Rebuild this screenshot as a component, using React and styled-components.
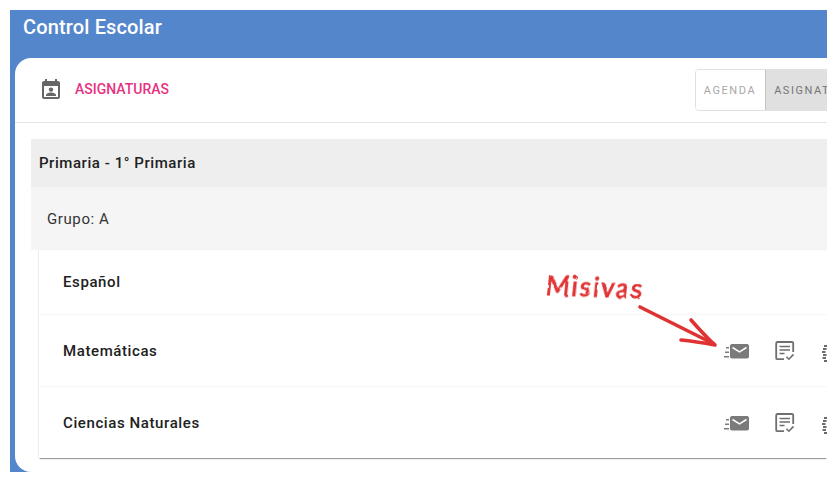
import React from "react";
import styled, { createGlobalStyle } from "styled-components";

const GlobalStyle = createGlobalStyle`
  html, body {
    margin: 0;
    padding: 0;
    background: #fff;
  }
  body {
    font-family: Roboto, "Liberation Sans", sans-serif;
    overflow: hidden;
  }
`;

const Page = styled.div`
  width: 837px;
  height: 482px;
  padding: 10px;
  box-sizing: border-box;
  position: relative;
`;

const Shell = styled.div`
  height: 100%;
  width: 817px;
  background: #5486cc;
  display: flex;
  flex-direction: column;
  overflow: hidden;
`;

const AppBar = styled.div`
  height: 48px;
  flex: none;
  padding: 5px 0 0 13px;
  box-sizing: border-box;
  color: #fff;
  font-size: 20px;
  font-weight: 500;
  letter-spacing: 0.15px;
  line-height: 24px;
`;

const Card = styled.div`
  flex: 1;
  margin-left: 5px;
  background: #fff;
  border-radius: 16px 0 0 16px;
  overflow: hidden;
  display: flex;
  flex-direction: column;
`;

const CardHeader = styled.div`
  height: 65px;
  flex: none;
  box-sizing: border-box;
  border-bottom: 1px solid #e4e4e4;
  display: flex;
  align-items: center;
  padding: 0 0 2px 24px;
`;

const Title = styled.span`
  margin-left: 12px;
  color: #e7327f;
  font-size: 14px;
  font-weight: 500;
`;

const Toggle = styled.div`
  margin: 2px -47px 0 auto;
  display: flex;
  height: 42px;
  box-sizing: border-box;
  border: 1px solid #e0e0e0;
  border-radius: 4px;
  overflow: hidden;
`;

const ToggleItem = styled.div`
  display: flex;
  align-items: center;
  padding: 0 9px 0 8px;
  font-size: 11px;
  letter-spacing: 1.55px;
  color: ${(p) => (p.$active ? "#757575" : "#a8a8a8")};
  background: ${(p) => (p.$active ? "#e0e0e0" : "#fff")};
  border-left: ${(p) => (p.$active ? "1px solid #c4c4c4" : "none")};
  white-space: nowrap;
`;

const Body = styled.div`
  padding: 16px 0 0 16px;
`;

const LevelRow = styled.div`
  height: 48px;
  background: #eeeeee;
  color: #212121;
  font-size: 15px;
  font-weight: 500;
  letter-spacing: 0.55px;
  display: flex;
  align-items: center;
  padding-left: 8px;
`;

const GroupRow = styled.div`
  height: 63px;
  background: #f5f5f5;
  color: #333;
  font-size: 15px;
  letter-spacing: 0.6px;
  display: flex;
  align-items: center;
  padding-left: 16px;
`;

const SubjectList = styled.div`
  margin-left: 8px;
  background: #fff;
  box-shadow: 0 2px 1px -1px rgba(0, 0, 0, 0.3), 0 1px 1px rgba(0, 0, 0, 0.1),
    -1px 0 1px rgba(0, 0, 0, 0.05);
`;

const SubjectRow = styled.div`
  height: ${(p) => (p.$short ? "64px" : "72px")};
  box-sizing: border-box;
  display: flex;
  align-items: center;
  padding-left: 24px;
  color: #212121;
  font-size: 15px;
  font-weight: 500;
  letter-spacing: 0.6px;
  & + & {
    border-top: 1px solid #f7f7f7;
  }
`;

const Actions = styled.div`
  margin-left: auto;
  margin-right: -30px;
  display: flex;
  align-items: center;
  flex: none;
`;

const ActionSlot = styled.div`
  width: 48px;
  display: flex;
  justify-content: center;
`;

const Note = styled.div`
  position: absolute;
  left: 546px;
  top: 269px;
  color: #e03232;
  font-family: Lato, sans-serif;
  font-size: 26px;
  letter-spacing: 1.9px;
  line-height: 32px;
  -webkit-text-stroke: 0.8px #e03232;
  transform: rotate(2deg) skewX(-4deg);
  transform-origin: left center;
  filter: url(#rough);
`;

const NoteArrow = styled.svg`
  position: absolute;
  left: 636px;
  top: 302px;
`;

const HiddenDefs = styled.svg`
  position: absolute;
  width: 0;
  height: 0;
`;

const CalendarIcon = () => (
  <svg width="24" height="24" viewBox="0 0 24 24" fill="#666">
    <path d="M19 4h-1V2h-2v2H8V2H6v2H5c-1.1 0-2 .9-2 2v14c0 1.1.9 2 2 2h14c1.1 0 2-.9 2-2V6c0-1.1-.9-2-2-2zm0 16H5V9h14v11z" />
    <circle cx="12" cy="12.6" r="2.2" />
    <path d="M7 19v-1c0-1.7 3.3-2.6 5-2.6s5 .9 5 2.6v1z" />
  </svg>
);

const MailIcon = () => (
  <svg width="26" height="18" viewBox="0 0 26 18" fill="#7a7a7a">
    <path d="M8 2h15c1.1 0 2 .9 2 2v10.5c0 1.1-.9 2-2 2H8c-1.1 0-2-.9-2-2V4c0-1.1.9-2 2-2z" />
    <path d="M8.5 5.5l7 4.3 7-4.3" fill="none" stroke="#fff" strokeWidth="1.5" />
    <path d="M2 5h3v1.5H2zM1 9.5h4V11H1zM0 14h5v1.5H0z" />
  </svg>
);

const ChecklistIcon = () => (
  <svg width="22" height="22" viewBox="0 0 22 22" fill="none" stroke="#6f6f6f">
    <path d="M10 19.2H3.5c-.7 0-1.3-.6-1.3-1.3V3.3c0-.7.6-1.3 1.3-1.3h14.4c.7 0 1.3.6 1.3 1.3v8.7" strokeWidth="1.8" />
    <path d="M5.5 6.5h10.5M5.5 10h10.5M5.5 13.5h5" strokeWidth="1.6" />
    <path d="M12.5 16.8l2.4 2.4 4.6-4.8" strokeWidth="1.6" />
  </svg>
);

const DotsIcon = () => (
  <svg width="24" height="24" viewBox="0 0 24 24" fill="#6a6a6a">
    <rect x="3" y="6" width="3.5" height="2" />
    <rect x="2" y="9" width="3.5" height="2" />
    <rect x="1" y="12" width="3.5" height="2" />
    <rect x="2" y="15" width="3.5" height="2" />
    <rect x="1.5" y="18" width="3.5" height="2" />
    <rect x="3" y="21" width="3.5" height="2" />
  </svg>
);

const RowActions = () => (
  <Actions>
    <ActionSlot>
      <MailIcon />
    </ActionSlot>
    <ActionSlot>
      <ChecklistIcon />
    </ActionSlot>
    <ActionSlot>
      <DotsIcon />
    </ActionSlot>
  </Actions>
);

export default function App() {
  return (
    <Page>
      <GlobalStyle />
      <HiddenDefs aria-hidden="true">
        <filter id="rough">
          <feTurbulence type="fractalNoise" baseFrequency="0.07" numOctaves="2" seed="4" />
          <feDisplacementMap in="SourceGraphic" scale="3" />
        </filter>
      </HiddenDefs>
      <Shell>
        <AppBar>Control Escolar</AppBar>
        <Card>
          <CardHeader>
            <CalendarIcon />
            <Title>ASIGNATURAS</Title>
            <Toggle>
              <ToggleItem>AGENDA</ToggleItem>
              <ToggleItem $active>ASIGNATURAS</ToggleItem>
            </Toggle>
          </CardHeader>
          <Body>
            <LevelRow>Primaria - 1° Primaria</LevelRow>
            <GroupRow>Grupo: A</GroupRow>
            <SubjectList>
              <SubjectRow $short>Español</SubjectRow>
              <SubjectRow>
                Matemáticas
                <RowActions />
              </SubjectRow>
              <SubjectRow>
                Ciencias Naturales
                <RowActions />
              </SubjectRow>
            </SubjectList>
          </Body>
        </Card>
      </Shell>
      <Note>Misivas</Note>
      <NoteArrow width="86" height="50" viewBox="0 0 86 50" fill="none" stroke="#e03232" strokeWidth="3.6" strokeLinecap="round" strokeLinejoin="round">
        <path d="M4 5C26 16 56 31 78 42" />
        <path d="M55 18C63 27 72 37 79 43C68 41 55 39 45 38" />
      </NoteArrow>
    </Page>
  );
}
